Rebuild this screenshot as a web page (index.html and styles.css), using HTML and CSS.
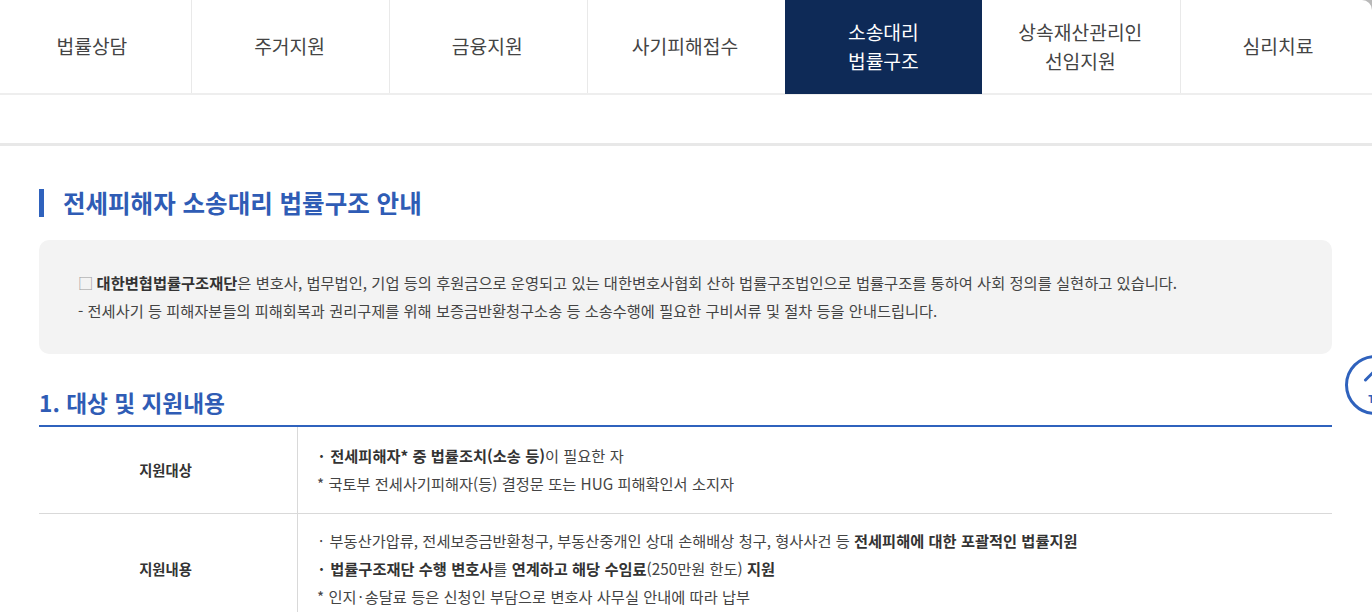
FILE: index.html
```html
<!DOCTYPE html>
<html lang="ko">
<head>
<meta charset="utf-8">
<title>전세피해자 소송대리 법률구조 안내</title>
<link rel="stylesheet" href="styles.css">
</head>
<body>
<div class="page">
  <nav class="tabs">
    <a class="tab">법률상담</a>
    <a class="tab">주거지원</a>
    <a class="tab">금융지원</a>
    <a class="tab">사기피해접수</a>
    <a class="tab active">소송대리<br>법률구조</a>
    <a class="tab">상속재산관리인<br>선임지원</a>
    <a class="tab">심리치료</a>
  </nav>
  <div class="band"></div>
  <main class="content">
    <h2 class="title">전세피해자 소송대리 법률구조 안내</h2>
    <div class="notice">
      <p class="lead"><span class="box">□</span> <b>대한변협법률구조재단</b>은 변호사, 법무법인, 기업 등의 후원금으로 운영되고 있는 대한변호사협회 산하 법률구조법인으로 법률구조를 통하여 사회 정의를 실현하고 있습니다.</p>
      <p>- 전세사기 등 피해자분들의 피해회복과 권리구제를 위해 보증금반환청구소송 등 소송수행에 필요한 구비서류 및 절차 등을 안내드립니다.</p>
    </div>
    <h3 class="section">1. 대상 및 지원내용</h3>
    <div class="table">
      <div class="row row-target">
        <div class="head">지원대상</div>
        <div class="cell">
          <p><b><span class="dot">·</span> 전세피해자* 중 법률조치(소송 등)</b>이 필요한 자</p>
          <p>* 국토부 전세사기피해자(등) 결정문 또는 HUG 피해확인서 소지자</p>
        </div>
      </div>
      <div class="row row-support">
        <div class="head">지원내용</div>
        <div class="cell">
          <p><span class="dot">·</span> 부동산가압류, 전세보증금반환청구, 부동산중개인 상대 손해배상 청구, 형사사건 등 <b>전세피해에 대한 포괄적인 법률지원</b></p>
          <p><b><span class="dot">·</span> 법률구조재단 수행 변호사</b>를 <b>연계하고 해당 수임료</b>(250만원 한도) <b>지원</b></p>
          <p>* 인지<span class="dot">·</span>송달료 등은 신청인 부담으로 변호사 사무실 안내에 따라 납부</p>
        </div>
      </div>
    </div>
  </main>
  <a class="top-btn" aria-label="TOP">
    <svg class="top-icon" width="60" height="60" viewBox="0 0 60 60">
      <circle cx="30" cy="30" r="28.5" fill="#fff" stroke="#2f62bd" stroke-width="3"/>
      <path d="M20.5 25 L30 15.5 L39.5 25" fill="none" stroke="#2f62bd" stroke-width="3" stroke-linecap="round"/>
      <text x="34" y="48" text-anchor="middle" class="top-text">TOP</text>
    </svg>
  </a>
</div>
</body>
</html>
```

FILE: styles.css
```css
* { box-sizing: border-box; }
html, body { margin: 0; padding: 0; }
body {
  background: #b9b9b9;
  color: #444;
  font-family: "Noto Sans CJK KR", "Noto Sans", sans-serif;
  overflow: hidden;
  height: 612px;
}
p, h2, h3 { margin: 0; }
b { color: #333; font-weight: 700; }
.page {
  position: relative;
  width: 1372px;
  height: 612px;
  overflow: hidden;
  background: #fff;
  border-top-right-radius: 10px;
}

.tabs {
  display: flex;
  width: 1384px;
  height: 95px;
  margin-left: -6.25px;
  border-bottom: 2px solid #eeeeee;
}
.tab {
  flex: 0 0 197.7px;
  display: flex;
  align-items: center;
  justify-content: center;
  text-align: center;
  font-size: 19.25px;
  line-height: 29px;
  color: #444;
  border-left: 1px solid #e9e9e9;
  height: 93px;
  padding-right: 2.4px;
}
.tab:first-child { border-left: 0; padding-right: 1.4px; }
.tab.active { background: #0e2a57; color: #fff; border-left: 0; height: 94px; padding-right: 0; }
.tab.active + .tab { border-left: 0; padding-right: 1.4px; }

.band { height: 51px; border-bottom: 3px solid #e8e8e8; }

.content { padding: 0 40px 0 39px; }
.title {
  margin-top: 43px;
  height: 28px;
  padding-left: 19px;
  border-left: 5px solid #2f62bd;
  color: #2f5cb5;
  font-size: 24.5px;
  line-height: 27px;
  font-weight: 700;
}
.notice {
  margin-top: 23px;
  height: 114px;
  padding: 28px 39px;
  background: #f3f3f3;
  border-radius: 10px;
  font-size: 15.26px;
  line-height: 28px;
}
.lead { font-size: 15.3px; }
.box { color: #999; margin-right: -1px; }
.section {
  margin-top: 31px;
  height: 40px;
  color: #2f5cb5;
  font-size: 22.7px;
  line-height: 35px;
  font-weight: 700;
}
.table { border-top: 2px solid #2f62bd; }
.row { display: flex; border-bottom: 1px solid #d9d9d9; }
.row-target { height: 87px; }
.row-support { height: 110px; }
.head {
  flex: 0 0 259px;
  display: flex;
  align-items: center;
  justify-content: center;
  border-right: 1px solid #d9d9d9;
  font-size: 14.3px;
  font-weight: 700;
  color: #333;
  padding-right: 5px;
}
.row-target .head { padding-bottom: 2px; }
.cell {
  flex: 1;
  padding: 14px 20px 0 19px;
  font-size: 15.28px;
  line-height: 28px;
}
.row-support .cell { padding-top: 12px; }
.dot { padding: 0 2px; }
.top-btn { position: absolute; left: 1345px; top: 355px; }
.top-icon { display: block; }
.top-text { font-family: "Noto Sans", sans-serif; font-size: 11px; font-weight: 700; fill: #2f62bd; }
```
